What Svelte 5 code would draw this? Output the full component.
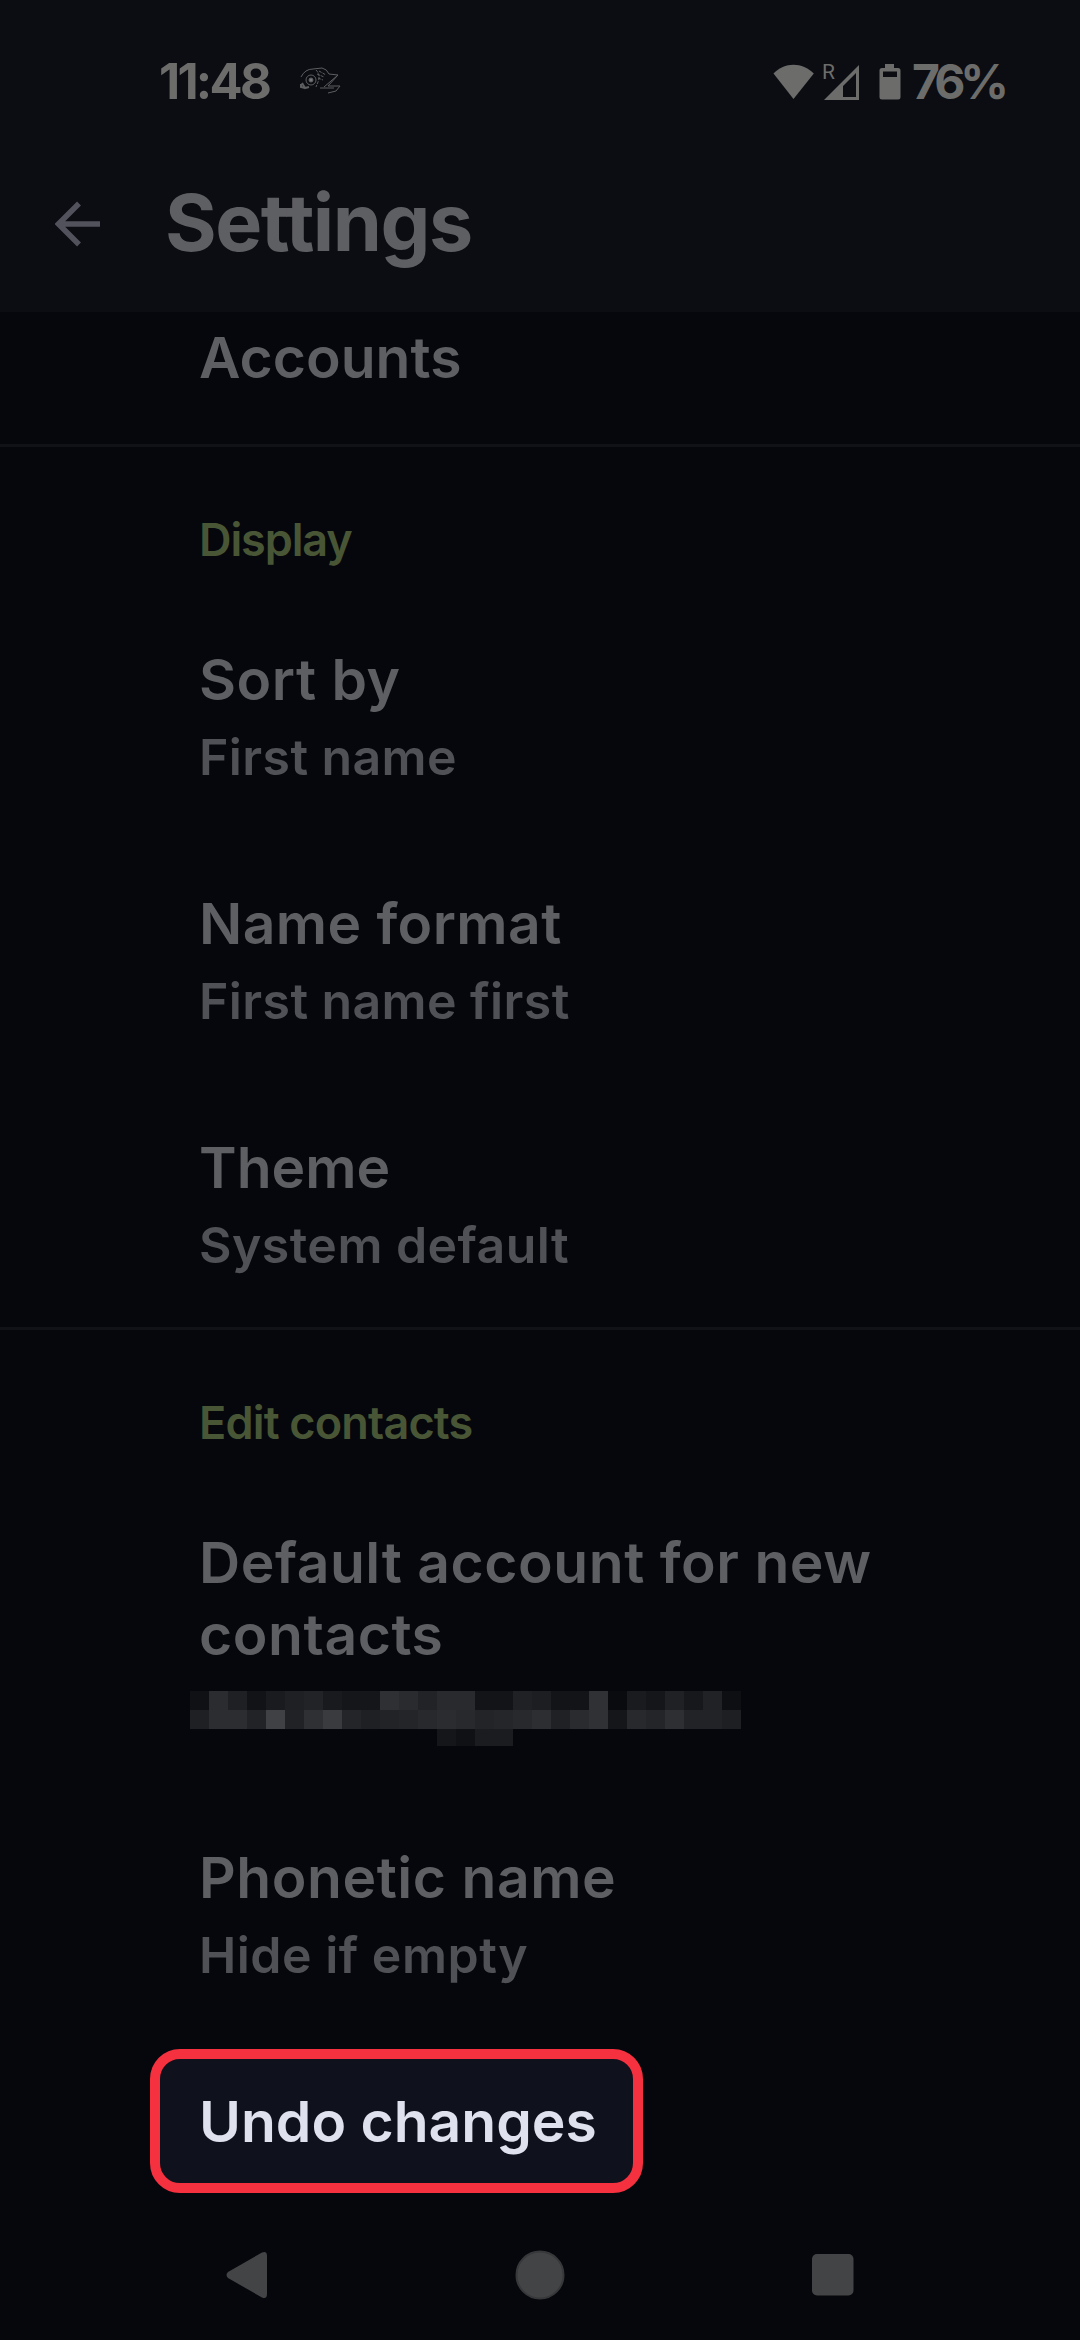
<script lang="ts">
	type Row = { title: string; summary: string; spacing: number; summarySpacing: number };

	const displayRows: Row[] = [
		{ title: 'Sort by', summary: 'First name', spacing: 0.5, summarySpacing: 0.4 },
		{ title: 'Name format', summary: 'First name first', spacing: 0.4, summarySpacing: 0.4 },
		{ title: 'Theme', summary: 'System default', spacing: 0, summarySpacing: 0.45 }
	];

	const phonetic: Row = {
		title: 'Phonetic name',
		summary: 'Hide if empty',
		spacing: 0.55,
		summarySpacing: 0.5
	};

	// Lightness of each block of the redacted account address, one list per line
	const mosaic = [
		[16, 43, 31, 18, 26, 31, 34, 25, 21, 21, 47, 42, 34, 41, 41, 19, 19, 32, 29, 19, 19, 48, 10, 26, 21, 32, 23, 33, 14],
		[31, 44, 44, 34, 64, 33, 47, 58, 36, 31, 34, 36, 40, 43, 40, 35, 37, 40, 45, 32, 42, 48, 21, 40, 36, 46, 34, 34, 30],
		[0, 0, 0, 0, 0, 0, 0, 0, 0, 0, 0, 0, 0, 21, 16, 27, 27, 0, 0, 0, 0, 0, 0, 0, 0, 0, 0, 0, 0]
	];
</script>

{#snippet row(item: Row)}
	<div class="row">
		<div class="title" style="letter-spacing: {item.spacing}px">{item.title}</div>
		<div class="summary" style="letter-spacing: {item.summarySpacing}px">{item.summary}</div>
	</div>
{/snippet}

<div class="screen">
	<header>
		<div class="status">
			<span class="clock">11:48</span>
			<svg class="notif" width="42" height="30" viewBox="0 0 42 30" fill="none" stroke="#5d5e60" stroke-width="1">
				<path d="M1 10Q5 2 13 2L22 1Q27 2 29 7L38 8 24 20M38 8 28 19H40L36 24 28 26M20 21H34" />
				<path d="M16 3Q21 8 18 15L16 20M17 7 24 10M19 4 26 8M18 11 23 13" stroke-dasharray="3 1" />
				<circle cx="11" cy="13" r="5" />
				<circle cx="11" cy="13" r="2" fill="#77787a" />
				<path d="M2 16 5 21 9 20M1 17V20L5 21" stroke-width="2" />
			</svg>
			<svg class="wifi" width="42" height="36" viewBox="0 0 42 36">
				<path d="M0.500 9.500C6 4 13 .8 20.500 .8S35 4 40.800 9.500L20.500 35z" fill="#6c6c6b" />
			</svg>
			<span class="roaming">R</span>
			<svg class="signal" width="36" height="38" viewBox="0 0 36 38">
				<path fill-rule="evenodd" d="M35 2V37H0zM32 10 19 23V34H32z" fill="#6c6c6b" />
			</svg>
			<svg class="battery" width="22" height="36" viewBox="0 0 22 36">
				<path fill-rule="evenodd" d="M6 0h9v4h4q2.500 0 2.500 2.500V33q0 2.500-2.500 2.500H3Q.5 35.500 .5 33V6.500Q.5 4 3 4h3zM4 7.500V13H18V7.500z" fill="#6c6c6b" />
			</svg>
			<span class="percent">76%</span>
		</div>
		<div class="bar">
			<svg class="back" width="46" height="46" viewBox="0 0 46 46" fill="none" stroke="#51525c" stroke-width="5.500">
				<path d="M45 23H5M24 2.500 3.500 23 24 43.500" />
			</svg>
			<h1>Settings</h1>
		</div>
	</header>

	<section class="accounts">
		<div class="title">Accounts</div>
	</section>

	<section class="display">
		<h2>Display</h2>
		{#each displayRows as item}
			{@render row(item)}
		{/each}
	</section>

	<section class="edit">
		<h2>Edit contacts</h2>
		<div class="row account">
			<div class="title">Default account for new<br />contacts</div>
			<div class="mosaic">
				{#each mosaic as line}
					{#each line as v}
						<i style="background: {v ? `rgb(${v}, ${v + 1}, ${v + 4})` : 'transparent'}"></i>
					{/each}
				{/each}
			</div>
		</div>
		{@render row(phonetic)}
		<div class="undo">Undo changes</div>
	</section>

	<nav>
		<svg width="42" height="50" viewBox="0 0 42 50">
			<path d="M2 22 36 2.500Q41 .5 41 6V44Q41 49.500 36 47.500L2 28Q-1 25 2 22z" fill="#434445" />
		</svg>
		<svg width="50" height="50" viewBox="0 0 50 50">
			<circle cx="25" cy="25" r="23.500" fill="#434445" stroke="#37383a" stroke-width="2" />
		</svg>
		<svg width="42" height="42" viewBox="0 0 42 42">
			<rect width="41.500" height="41.500" rx="5" fill="#434445" />
		</svg>
	</nav>
</div>

<style>
	:global(body) {
		margin: 0;
		background: #05070c;
	}

	.screen {
		width: 1080px;
		height: 2340px;
		display: flex;
		flex-direction: column;
		overflow: hidden;
		background: #05070c;
		color: #5e5f63;
		font-family: Inter, 'Liberation Sans', sans-serif;
	}

	header {
		height: 312px;
		background: #0b0d12;
	}

	.status {
		display: flex;
		align-items: center;
		height: 164px;
		padding-left: 159px;
		color: #6c6c6b;
		font-size: 49px;
		font-weight: 700;
	}

	.clock {
		width: 110px;
		margin-top: -1px;
		letter-spacing: -2.700px;
	}

	.notif {
		margin-left: 31px;
	}

	.wifi {
		margin-left: 431px;
	}

	.roaming {
		width: 11px;
		height: 38px;
		margin-left: 7px;
		margin-right: -9px;
		font-family: Roboto, sans-serif;
		font-size: 21px;
		font-weight: 400;
		line-height: 19px;
	}

	.battery {
		margin-left: 19px;
	}

	.percent {
		margin: -1px 0 0 11px;
		font-size: 48px;
		letter-spacing: -5px;
	}

	.bar {
		display: flex;
		align-items: center;
		height: 120px;
		padding-left: 55px;
	}

	h1 {
		margin: -4px 0 0 64px;
		font-size: 79px;
		font-weight: 650;
		letter-spacing: -1.500px;
		line-height: 120px;
	}

	h2 {
		margin: 0;
		color: #495636;
		font-size: 45px;
		font-weight: 600;
		letter-spacing: -1.100px;
		line-height: 60px;
	}

	section {
		padding-left: 199px;
		box-sizing: border-box;
		flex: none;
	}

	.title {
		font-size: 57px;
		font-weight: 600;
		line-height: 71.500px;
		white-space: nowrap;
	}

	.summary {
		margin-top: 9px;
		color: #505156;
		font-size: 50px;
		font-weight: 600;
		line-height: 64px;
		white-space: nowrap;
	}

	.accounts {
		height: 135px;
		padding-top: 10px;
		border-bottom: 3px solid #101217;
	}

	.display {
		height: 883px;
		padding-top: 63px;
		border-bottom: 3px solid #101217;
	}

	.row {
		height: 244px;
	}

	h2 + .row {
		margin-top: 74px;
	}

	.edit {
		padding-top: 63px;
	}

	.edit h2 {
		letter-spacing: -0.800px;
	}

	.row.account {
		height: 315px;
	}

	.account .title {
		letter-spacing: 0.550px;
	}

	.mosaic {
		display: grid;
		grid-template-columns: repeat(29, 19px);
		grid-template-rows: 19px 19px 17px;
		margin: 21px 0 0 -9px;
	}

	.undo {
		display: flex;
		align-items: center;
		box-sizing: border-box;
		width: 493px;
		height: 144px;
		margin: -37px 0 0 -49px;
		padding-left: 39px;
		border: 10px solid #f6313f;
		border-radius: 30px;
		background: #0f121c;
		color: #dfe1ee;
		font-size: 57px;
		font-weight: 600;
		white-space: nowrap;
	}

	nav {
		display: flex;
		align-items: center;
		justify-content: space-between;
		height: 50px;
		margin-top: 57px;
		padding: 0 226px 0 226px;
	}
</style>
